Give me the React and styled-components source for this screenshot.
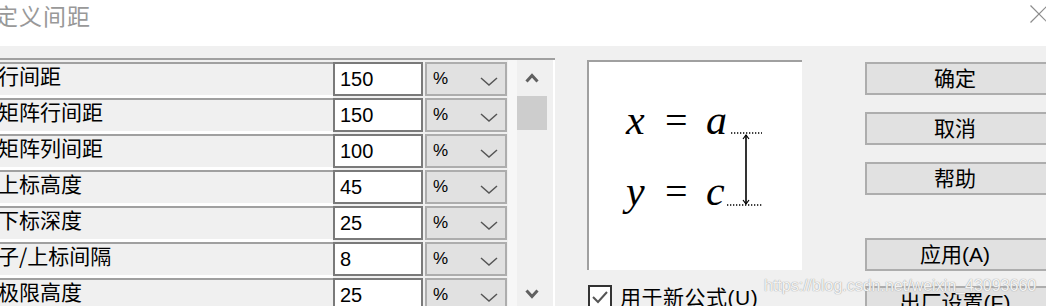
import React from "react";
import styled, { createGlobalStyle } from "styled-components";

const GlobalStyle = createGlobalStyle`
  html, body { margin: 0; padding: 0; }
  body {
    width: 1046px;
    height: 306px;
    overflow: hidden;
    background: #f0f0f0;
    font-family: "Liberation Sans", "Noto Sans CJK SC", sans-serif;
    color: #000;
  }
`;

const Page = styled.div`
  position: relative;
  width: 1046px;
  height: 306px;
  overflow: hidden;
  background: #f0f0f0;
`;

const TitleBar = styled.div`
  height: 46px;
  background: #fff;
  display: flex;
  justify-content: space-between;
  align-items: flex-start;
`;

const Title = styled.div`
  font-family: "Noto Sans CJK SC", sans-serif;
  font-size: 23px;
  line-height: 30px;
  color: #999;
  margin-left: -5px;
  letter-spacing: 1px;
`;

const CloseIcon = styled.svg`
  margin-top: 5px;
  margin-right: -2px;
  width: 18px;
  height: 18px;
`;

const Body = styled.div`
  display: flex;
  padding-top: 12px;
`;

const Table = styled.div`
  width: 555px;
  border-top: 2px solid #a0a0a0;
  display: flex;
`;

const RowList = styled.div`
  width: 508px;
  padding-top: 2px;
  display: flex;
  flex-direction: column;
`;

const Row = styled.div`
  display: flex;
  height: 36px;
  flex-shrink: 0;
`;

const Label = styled.div`
  width: 333px;
  height: 36px;
  box-sizing: border-box;
  border-top: 2px solid #a0a0a0;
  border-bottom: 3px solid #fff;
  background: #f0f0f0;
  font-family: "Noto Sans CJK SC", sans-serif;
  font-size: 21px;
  line-height: 22px;
  text-indent: -2px;
  white-space: nowrap;
  overflow: hidden;
`;

const ValueBox = styled.div`
  width: 90px;
  height: 34px;
  box-sizing: border-box;
  border: 2px solid #7a7a7a;
  background: #fff;
  padding-left: 5px;
  display: flex;
  align-items: center;
  font-size: 20px;
`;

const UnitBox = styled.div`
  margin-left: 2px;
  width: 82px;
  height: 34px;
  box-sizing: border-box;
  border: 2px solid #adadad;
  background: #e1e1e1;
  display: flex;
  align-items: center;
  justify-content: space-between;
  padding: 0 7px 0 6px;
  font-size: 17px;
`;

const Chevron = styled.svg`
  width: 18px;
  height: 9px;
  margin-top: 5px;
`;

const ScrollBar = styled.div`
  width: 36px;
  height: 252px;
  border-left: 9px solid #f7f7f7;
  border-right: 2px solid #fff;
  background: #f0f0f0;
  display: flex;
  flex-direction: column;
`;

const ScrollButton = styled.div`
  height: 36px;
  display: flex;
  align-items: center;
  justify-content: flex-start;
  padding-left: 8px;
  flex-shrink: 0;
`;

const Thumb = styled.div`
  width: 30px;
  height: 34px;
  background: #cdcdcd;
`;

const Track = styled.div`
  flex: 1;
`;

const PreviewCol = styled.div`
  margin-left: 32px;
  width: 215px;
  display: flex;
  flex-direction: column;
`;

const Preview = styled.div`
  margin-top: 2px;
  width: 215px;
  height: 210px;
  box-sizing: border-box;
  border-top: 2px solid #a0a0a0;
  border-left: 2px solid #a0a0a0;
  background: #fff;
`;

const CheckRow = styled.div`
  margin-top: 15px;
  display: flex;
  align-items: flex-start;
`;

const CheckBox = styled.div`
  margin-left: 1px;
  width: 24px;
  height: 24px;
  box-sizing: border-box;
  border: 2px solid #333;
  background: #fff;
  display: flex;
  align-items: center;
  justify-content: center;
`;

const CheckLabel = styled.span`
  margin-left: 8px;
  font-size: 21px;
  line-height: 26px;
  white-space: nowrap;
  letter-spacing: 0.5px;
`;

const ButtonCol = styled.div`
  margin-left: 63px;
  display: flex;
  flex-direction: column;
`;

const Button = styled.div`
  margin-top: ${(p) => p.$gap}px;
  width: 184px;
  height: 33px;
  box-sizing: border-box;
  border: 2px solid #adadad;
  background: #e1e1e1;
  display: flex;
  align-items: center;
  justify-content: center;
  font-size: 21px;
  white-space: nowrap;
  padding: 0 4px 3px 0;
`;

const Watermark = styled.div`
  position: absolute;
  left: 764px;
  top: 277px;
  font-family: "Liberation Sans", sans-serif;
  font-size: 16px;
  color: rgba(255, 255, 255, 0.9);
  text-shadow: 0 0 1px #999, 0 0 1px #bbb;
  white-space: nowrap;
  pointer-events: none;
`;

const rows = [
  ["行间距", "150"],
  ["矩阵行间距", "150"],
  ["矩阵列间距", "100"],
  ["上标高度", "45"],
  ["下标深度", "25"],
  ["子/上标间隔", "8"],
  ["极限高度", "25"],
];

const buttons = [
  ["确定", 4],
  ["取消", 17],
  ["帮助", 17],
  ["应用(A)", 43],
  ["出厂设置(F)", 15],
];

function Formula() {
  const it = { fontFamily: '"Liberation Serif", serif', fontStyle: "italic", fontSize: 42 };
  const eq = { fontFamily: '"Liberation Serif", serif', fontSize: 40 };
  return (
    <svg width="213" height="208" viewBox="0 0 213 208">
      <text x="37" y="72" style={it}>x</text>
      <text x="76" y="72" style={eq}>=</text>
      <text x="117" y="72" style={it}>a</text>
      <text x="37" y="143" style={it}>y</text>
      <text x="76" y="143" style={eq}>=</text>
      <text x="117" y="143" style={it}>c</text>
      <line x1="142" y1="71" x2="173" y2="71" stroke="#000" strokeWidth="1.3" strokeDasharray="1.3 1.7" />
      <line x1="138" y1="143" x2="173" y2="143" stroke="#000" strokeWidth="1.3" strokeDasharray="1.3 1.7" />
      <line x1="157" y1="73" x2="157" y2="142" stroke="#000" strokeWidth="1.6" />
      <polyline points="154,77 157,73 160,77" fill="none" stroke="#000" strokeWidth="1.2" />
      <polyline points="154,138 157,142 160,138" fill="none" stroke="#000" strokeWidth="1.2" />
    </svg>
  );
}

export default function App() {
  return (
    <Page>
      <GlobalStyle />
      <TitleBar>
        <Title>定义间距</Title>
        <CloseIcon viewBox="0 0 18 18">
          <line x1="0.5" y1="0.5" x2="17.5" y2="17.5" stroke="#8c8c8c" strokeWidth="1.2" />
          <line x1="17.5" y1="0.5" x2="0.5" y2="17.5" stroke="#8c8c8c" strokeWidth="1.2" />
        </CloseIcon>
      </TitleBar>
      <Body>
        <Table>
          <RowList>
            {rows.map(([label, value]) => (
              <Row key={label}>
                <Label>{label}</Label>
                <ValueBox>{value}</ValueBox>
                <UnitBox>
                  <span>%</span>
                  <Chevron viewBox="0 0 18 9">
                    <polyline points="1,1 9,8 17,1" fill="none" stroke="#555" strokeWidth="1.5" />
                  </Chevron>
                </UnitBox>
              </Row>
            ))}
          </RowList>
          <ScrollBar>
            <ScrollButton>
              <svg width="14" height="10" viewBox="0 0 14 10">
                <polyline points="1.5,8.5 7,2.5 12.5,8.5" fill="none" stroke="#606060" strokeWidth="3" />
              </svg>
            </ScrollButton>
            <Thumb />
            <Track />
            <ScrollButton>
              <svg width="14" height="10" viewBox="0 0 14 10">
                <polyline points="1.5,1.5 7,7.5 12.5,1.5" fill="none" stroke="#606060" strokeWidth="3" />
              </svg>
            </ScrollButton>
          </ScrollBar>
        </Table>
        <PreviewCol>
          <Preview>
            <Formula />
          </Preview>
          <CheckRow>
            <CheckBox>
              <svg width="18" height="14" viewBox="0 0 18 14">
                <polyline points="2,7 7,12 16,2" fill="none" stroke="#555" strokeWidth="2" />
              </svg>
            </CheckBox>
            <CheckLabel>用于新公式(U)</CheckLabel>
          </CheckRow>
        </PreviewCol>
        <ButtonCol>
          {buttons.map(([t, g]) => (
            <Button key={t} $gap={g}>{t}</Button>
          ))}
        </ButtonCol>
      </Body>
      <Watermark>https://blog.csdn.net/weixin_43093660</Watermark>
    </Page>
  );
}
